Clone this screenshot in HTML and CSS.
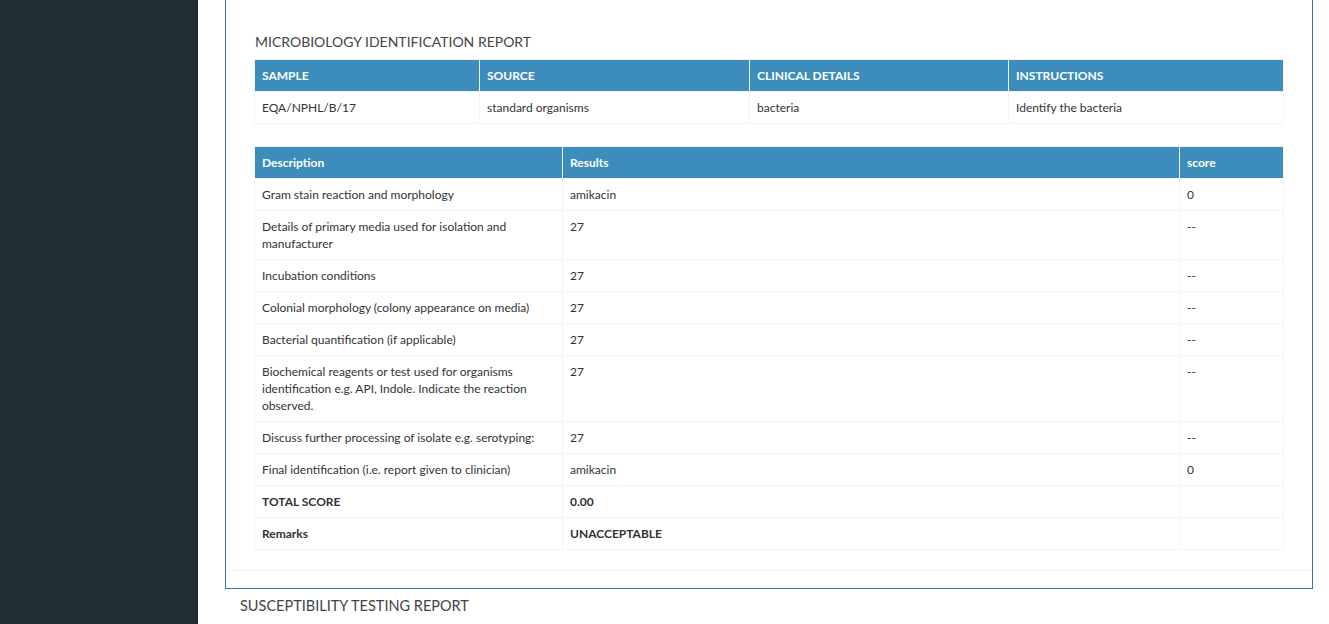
FILE: index.html
```html
<!DOCTYPE html>
<html>
<head>
<meta charset="utf-8">
<link rel="stylesheet" href="styles.css">
</head>
<body>
<div class="layout">
  <aside class="sidebar"></aside>
  <main class="main">
    <section class="box">
      <div class="box-body">
        <h3 class="report-title">MICROBIOLOGY IDENTIFICATION REPORT</h3>
        <table class="tbl tbl-info">
          <colgroup><col class="c1"><col class="c2"><col class="c3"><col class="c4"></colgroup>
          <thead>
            <tr><th>SAMPLE</th><th>SOURCE</th><th>CLINICAL DETAILS</th><th>INSTRUCTIONS</th></tr>
          </thead>
          <tbody>
            <tr><td>EQA/NPHL/B/17</td><td>standard organisms</td><td>bacteria</td><td>Identify the bacteria</td></tr>
          </tbody>
        </table>
        <table class="tbl tbl-results">
          <colgroup><col class="d1"><col class="d2"><col class="d3"></colgroup>
          <thead>
            <tr><th>Description</th><th>Results</th><th>score</th></tr>
          </thead>
          <tbody>
            <tr><td>Gram stain reaction and morphology</td><td>amikacin</td><td>0</td></tr>
            <tr><td>Details of primary media used for isolation and manufacturer</td><td>27</td><td>--</td></tr>
            <tr><td>Incubation conditions</td><td>27</td><td>--</td></tr>
            <tr><td>Colonial morphology (colony appearance on media)</td><td>27</td><td>--</td></tr>
            <tr><td>Bacterial quantification (if applicable)</td><td>27</td><td>--</td></tr>
            <tr><td>Biochemical reagents or test used for organisms identification e.g. API, Indole. Indicate the reaction observed.</td><td>27</td><td>--</td></tr>
            <tr><td>Discuss further processing of isolate e.g. serotyping:</td><td>27</td><td>--</td></tr>
            <tr><td>Final identification (i.e. report given to clinician)</td><td>amikacin</td><td>0</td></tr>
            <tr class="strong"><td>TOTAL SCORE</td><td>0.00</td><td></td></tr>
            <tr class="strong"><td>Remarks</td><td>UNACCEPTABLE</td><td></td></tr>
          </tbody>
        </table>
      </div>
      <div class="box-footer"></div>
    </section>
    <h3 class="section-title">SUSCEPTIBILITY TESTING REPORT</h3>
  </main>
</div>
</body>
</html>
```

FILE: styles.css
```css
html, body {
  margin: 0;
  padding: 0;
  height: 100%;
  overflow: hidden;
  background: #ffffff;
  font-family: Lato, "Open Sans", sans-serif;
  color: #333333;
}

.layout {
  display: flex;
  min-height: 624px;
}

.sidebar {
  width: 198px;
  flex: 0 0 198px;
  background: #222d32;
}

.main {
  flex: 1;
  padding: 0 16px 0 27px;
}

.box {
  border: 1px solid #3178b9;
  border-top: none;
  background: #ffffff;
}

.box-body {
  padding: 31px 28px 20px 28px;
}

.report-title {
  margin: 0 0 6px 1px;
  font-size: 14px;
  line-height: 22px;
  font-weight: 400;
  color: #444444;
}

.tbl {
  width: 100%;
  border-collapse: collapse;
  table-layout: fixed;
  font-size: 12px;
  line-height: 17px;
}

.tbl th,
.tbl td {
  border: 1px solid #f4f4f4;
  padding: 7px 7px;
  text-align: left;
  vertical-align: top;
}

.tbl th {
  background: #3c8dbc;
  color: #ffffff;
  font-weight: 700;
  border-color: #f4f4f4;
}

.tbl-info {
  margin-bottom: 22px;
}

.c1 { width: 225px; }
.c2 { width: 270px; }
.c3 { width: 259px; }
.c4 { width: auto; }

.d1 { width: 308px; }
.d2 { width: 617px; }
.d3 { width: auto; }

.tbl tr.strong td {
  font-weight: 700;
}

.box-footer {
  border-top: 1px solid #f4f4f4;
  height: 17px;
}

.section-title {
  margin: 6px 0 0 15px;
  font-size: 14.5px;
  line-height: 22px;
  font-weight: 400;
  color: #444444;
}
```
